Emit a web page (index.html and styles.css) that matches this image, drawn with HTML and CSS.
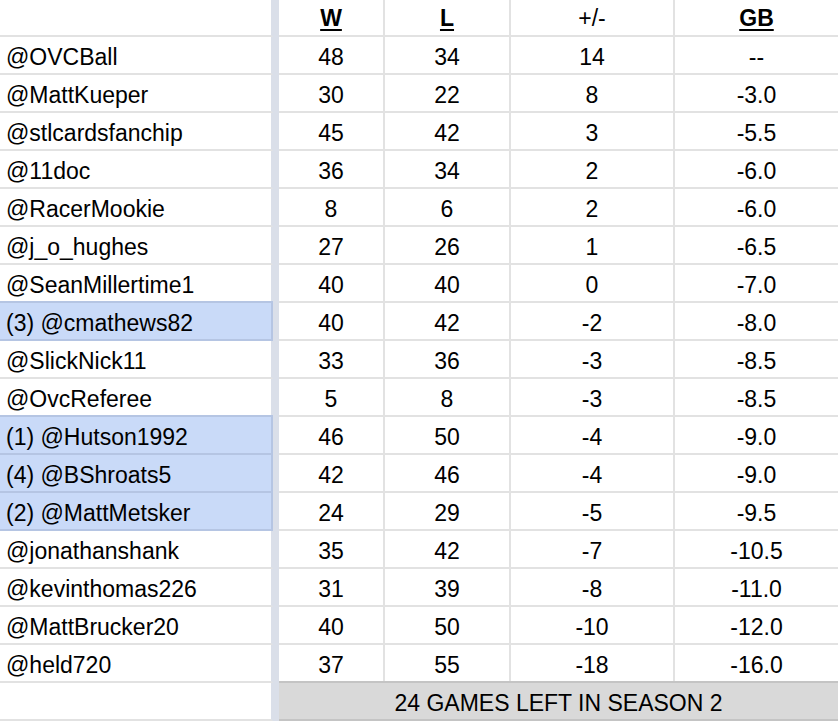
FILE: index.html
```html
<!DOCTYPE html>
<html lang="en">
<head>
<meta charset="utf-8">
<title>Standings</title>
<link rel="stylesheet" href="styles.css">
</head>
<body>
<div class="sheet">
  <div class="row head">
    <div class="cell name"></div><div class="freeze"></div>
    <div class="cell num"><span class="ul">W</span></div>
    <div class="cell num"><span class="ul">L</span></div>
    <div class="cell num">+/-</div>
    <div class="cell num last"><span class="ul">GB</span></div>
  </div>
  <div class="row"><div class="cell name">@OVCBall</div><div class="freeze"></div><div class="cell num">48</div><div class="cell num">34</div><div class="cell num">14</div><div class="cell num last">--</div></div>
  <div class="row"><div class="cell name">@MattKueper</div><div class="freeze"></div><div class="cell num">30</div><div class="cell num">22</div><div class="cell num">8</div><div class="cell num last">-3.0</div></div>
  <div class="row"><div class="cell name">@stlcardsfanchip</div><div class="freeze"></div><div class="cell num">45</div><div class="cell num">42</div><div class="cell num">3</div><div class="cell num last">-5.5</div></div>
  <div class="row"><div class="cell name">@11doc</div><div class="freeze"></div><div class="cell num">36</div><div class="cell num">34</div><div class="cell num">2</div><div class="cell num last">-6.0</div></div>
  <div class="row"><div class="cell name">@RacerMookie</div><div class="freeze"></div><div class="cell num">8</div><div class="cell num">6</div><div class="cell num">2</div><div class="cell num last">-6.0</div></div>
  <div class="row"><div class="cell name">@j_o_hughes</div><div class="freeze"></div><div class="cell num">27</div><div class="cell num">26</div><div class="cell num">1</div><div class="cell num last">-6.5</div></div>
  <div class="row"><div class="cell name">@SeanMillertime1</div><div class="freeze"></div><div class="cell num">40</div><div class="cell num">40</div><div class="cell num">0</div><div class="cell num last">-7.0</div></div>
  <div class="row"><div class="cell name hl">(3) @cmathews82</div><div class="freeze"></div><div class="cell num">40</div><div class="cell num">42</div><div class="cell num">-2</div><div class="cell num last">-8.0</div></div>
  <div class="row"><div class="cell name">@SlickNick11</div><div class="freeze"></div><div class="cell num">33</div><div class="cell num">36</div><div class="cell num">-3</div><div class="cell num last">-8.5</div></div>
  <div class="row"><div class="cell name">@OvcReferee</div><div class="freeze"></div><div class="cell num">5</div><div class="cell num">8</div><div class="cell num">-3</div><div class="cell num last">-8.5</div></div>
  <div class="row"><div class="cell name hl">(1) @Hutson1992</div><div class="freeze"></div><div class="cell num">46</div><div class="cell num">50</div><div class="cell num">-4</div><div class="cell num last">-9.0</div></div>
  <div class="row"><div class="cell name hl">(4) @BShroats5</div><div class="freeze"></div><div class="cell num">42</div><div class="cell num">46</div><div class="cell num">-4</div><div class="cell num last">-9.0</div></div>
  <div class="row"><div class="cell name hl">(2) @MattMetsker</div><div class="freeze"></div><div class="cell num">24</div><div class="cell num">29</div><div class="cell num">-5</div><div class="cell num last">-9.5</div></div>
  <div class="row"><div class="cell name">@jonathanshank</div><div class="freeze"></div><div class="cell num">35</div><div class="cell num">42</div><div class="cell num">-7</div><div class="cell num last">-10.5</div></div>
  <div class="row"><div class="cell name">@kevinthomas226</div><div class="freeze"></div><div class="cell num">31</div><div class="cell num">39</div><div class="cell num">-8</div><div class="cell num last">-11.0</div></div>
  <div class="row"><div class="cell name">@MattBrucker20</div><div class="freeze"></div><div class="cell num">40</div><div class="cell num">50</div><div class="cell num">-10</div><div class="cell num last">-12.0</div></div>
  <div class="row"><div class="cell name">@held720</div><div class="freeze"></div><div class="cell num">37</div><div class="cell num">55</div><div class="cell num">-18</div><div class="cell num last">-16.0</div></div>
  <div class="row foot"><div class="cell name"></div><div class="freeze"></div><div class="cell footer">24 GAMES LEFT IN SEASON 2</div></div>
</div>
</body>
</html>
```

FILE: styles.css
```css
html, body {
  margin: 0;
  padding: 0;
  background: #ffffff;
}

.sheet {
  width: 838px;
  font-family: "Liberation Sans", Arial, sans-serif;
  font-size: 23px;
  color: #000000;
}

.row {
  display: grid;
  grid-template-columns: 273px 6px 106px 126px 164px 163px;
  height: 38px;
}

.row.head {
  height: 37px;
}

.cell {
  box-sizing: border-box;
  border-bottom: 2px solid #e2e2e2;
  display: flex;
  align-items: center;
  padding-top: 4px;
  white-space: nowrap;
  overflow: hidden;
  position: relative;
}

.head .cell {
  padding-top: 2px;
}

.name {
  padding-left: 6px;
  border-right: 2px solid #dadfe9;
}

.name.hl {
  background: #c9daf8;
  border-bottom-color: #b5c5e3;
  border-right-color: #b5c5e3;
  box-shadow: 0 -2px 0 #b5c5e3;
}

.freeze {
  background: #dadfe9;
}

.num {
  justify-content: center;
  border-right: 2px solid #e2e2e2;
}

.num.last {
  border-right: none;
}

.ul {
  font-weight: bold;
  text-decoration: underline;
  text-decoration-thickness: 2px;
  text-underline-offset: 3px;
}

.footer {
  grid-column: 3 / 7;
  justify-content: center;
  background: #d9d9d9;
  border-bottom: 2px solid #c4c4c4;
  box-shadow: 0 -2px 0 #c4c4c4;
}
```
